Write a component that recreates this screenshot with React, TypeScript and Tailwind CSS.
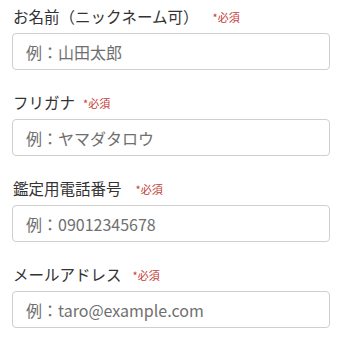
const FIELDS = [
  { label: "お名前（ニックネーム可）", placeholder: "例：山田太郎", type: "text", gap: "ml-[14px]" },
  { label: "フリガナ", placeholder: "例：ヤマダタロウ", type: "text", gap: "ml-[8px]" },
  { label: "鑑定用電話番号", placeholder: "例：09012345678", type: "tel", gap: "ml-[14px]" },
  { label: "メールアドレス", placeholder: "例：taro@example.com", type: "email", gap: "ml-[11px]" },
];

export default function App() {
  return (
    <div
      className="min-h-screen bg-white px-3 pt-[4px]"
      style={{ fontFamily: '"Noto Sans CJK JP", "Noto Sans", sans-serif' }}
    >
      {FIELDS.map((f) => (
        <div key={f.label} className="mb-5">
          <label className="mb-[5px] flex h-6 items-center pl-px text-[15.5px] leading-6 text-[#333]">
            <span>{f.label}</span>
            <span className={`${f.gap} mt-[2px] text-[11px] text-[#c43b35]`}>*必須</span>
          </label>
          <input
            type={f.type}
            placeholder={f.placeholder}
            className="block h-[37px] w-[318px] rounded-[4px] border border-[#cfcfcf] bg-white px-[13px] text-[16px] text-[#333] outline-none placeholder:text-[#6f6f6f]"
          />
        </div>
      ))}
    </div>
  );
}
